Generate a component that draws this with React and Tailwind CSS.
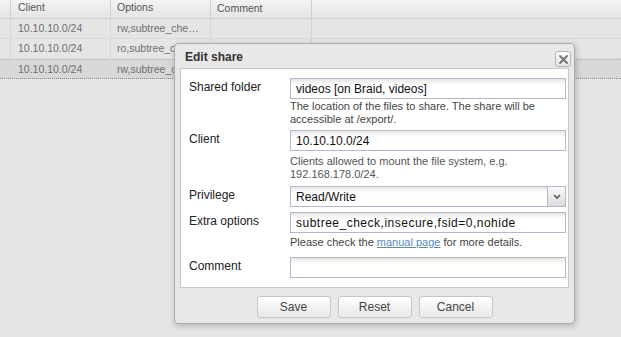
import React from "react";

const rows = [
    { client: "10.10.10.0/24", options: "rw,subtree_check,insecure" },
    { client: "10.10.10.0/24", options: "ro,subtree_check,insecure" },
    { client: "10.10.10.0/24", options: "rw,subtree_check,insecure", selected: true },
];

const field = "h-[21px] border border-[#b5b8c8] bg-[linear-gradient(to_bottom,#e6e6e6,#ffffff_6px)] px-[5px] text-[12px] text-[#111] flex items-center whitespace-nowrap overflow-hidden";

const Label = ({ children }) => (
    <div className="w-[101px] shrink-0 text-[12px] leading-[18px] text-[#222]">{children}</div>
);

const Help = ({ children, className }) => (
    <div className={`text-[11px] leading-[13px] text-[#444] ${className}`}>{children}</div>
);

const App = () => {
    return (
        <div className="relative w-[621px] h-[337px] overflow-hidden bg-[#e5e5e5] font-['Liberation_Sans',Arial,sans-serif]">
            {/* background grid */}
            <div className="flex h-[19px] border-b border-[#cfcfcf] bg-[linear-gradient(to_bottom,#f3f3f3,#e4e4e4)] text-[10.5px] text-[#555]">
                <div className="w-[11px] border-r border-[#d0d0d0]"></div>
                <div className="w-[100px] border-r border-[#d0d0d0] pl-[7px] leading-[15px]">Client</div>
                <div className="w-[100px] border-r border-[#d0d0d0] pl-[6px] leading-[15px]">Options</div>
                <div className="w-[101px] border-r border-[#d0d0d0] pl-[6px] leading-[17px]">Comment</div>
                <div className="flex-1"></div>
            </div>
            {
                rows.map((r, i) =>
                    <div key={i} className={`flex h-[20px] text-[10.5px] text-[#6f6f6f] ${r.selected ? "bg-[#d8d8d8] border-t border-[#b9b9b9] border-b border-dotted border-b-[#888]" : "border-b border-[#dadada]"}`}>
                        <div className="w-[11px] border-r border-[#d6d6d6]"></div>
                        <div className="w-[100px] border-r border-[#d6d6d6] pl-[7px] leading-[18px]">{r.client}</div>
                        <div className="w-[100px] border-r border-[#d6d6d6] pl-[6px] pr-[10px] leading-[18px] whitespace-nowrap overflow-hidden text-ellipsis">{r.options}</div>
                        <div className="w-[101px] border-r border-[#d6d6d6]"></div>
                        <div className="flex-1"></div>
                    </div>
                )
            }

            {/* dialog */}
            <div className="absolute left-[174px] top-[43px] w-[401px] h-[281px] rounded-[4px] border border-[#ababab] bg-[#e8e8e8] shadow-[1px_2px_6px_rgba(0,0,0,0.22)] flex flex-col">
                <div className="h-[24px] flex items-center justify-between pl-[10px] pr-[3px]">
                    <span className="font-bold text-[12px] text-[#333] pt-[1px]">Edit share</span>
                    <div className="self-start mt-[7px] w-[16px] h-[16px] rounded-[3px] border border-[#b3b3b3] bg-[linear-gradient(to_bottom,#ffffff,#e4e4e4)] flex items-center justify-center">
                        <svg width="9" height="9" viewBox="0 0 9 9">
                            <path d="M1 1 L8 8 M8 1 L1 8" stroke="#707070" strokeWidth="1.8" strokeLinecap="round" />
                        </svg>
                    </div>
                </div>

                <div className="mx-[5px] bg-white border border-[#c8c8c8] pl-[8px] pr-[2px] pt-[9px] pb-[9px]">
                    <div className="flex">
                        <Label>Shared folder</Label>
                        <div className="flex-1">
                            <div className={field}>videos [on Braid, videos]</div>
                            <Help className="mt-[1px]">The location of the files to share. The share will be accessible at /export/.</Help>
                        </div>
                    </div>
                    <div className="flex mt-[4px]">
                        <Label>Client</Label>
                        <div className="flex-1">
                            <div className={field}>10.10.10.0/24</div>
                            <Help className="mt-[4px] text-[#555]">Clients allowed to mount the file system, e.g.<br />192.168.178.0/24.</Help>
                        </div>
                    </div>
                    <div className="flex mt-[5px]">
                        <Label>Privilege</Label>
                        <div className="flex-1">
                            <div className={`${field} pr-0`}>
                                <span className="flex-1">Read/Write</span>
                                <div className="w-[18px] h-full border-l border-[#b5b8c8] bg-[linear-gradient(to_bottom,#fafafa,#dcdcdc)] flex items-center justify-center">
                                    <svg width="8" height="5" viewBox="0 0 8 5">
                                        <path d="M1 1 L4 4 L7 1" stroke="#555" strokeWidth="1.6" fill="none" />
                                    </svg>
                                </div>
                            </div>
                        </div>
                    </div>
                    <div className="flex mt-[5px]">
                        <Label>Extra options</Label>
                        <div className="flex-1">
                            <div className={`${field} tracking-[0.5px]`}>subtree_check,insecure,fsid=0,nohide</div>
                            <Help className="mt-[3px]">Please check the <span className="text-[#5a86cc] underline">manual page</span> for more details.</Help>
                        </div>
                    </div>
                    <div className="flex mt-[8px]">
                        <Label>Comment</Label>
                        <div className="flex-1">
                            <div className={field}></div>
                        </div>
                    </div>
                </div>

                <div className="flex-1 flex items-center justify-center gap-[7px] pt-[3px]">
                    {["Save", "Reset", "Cancel"].map(b =>
                        <div key={b} className="w-[74px] h-[22px] rounded-[3px] border border-[#c6c6c6] bg-[linear-gradient(to_bottom,#fefefe,#e8e8e8)] text-[12px] text-[#444] flex items-center justify-center">{b}</div>
                    )}
                </div>
            </div>
        </div>
    );
};

export default App;
